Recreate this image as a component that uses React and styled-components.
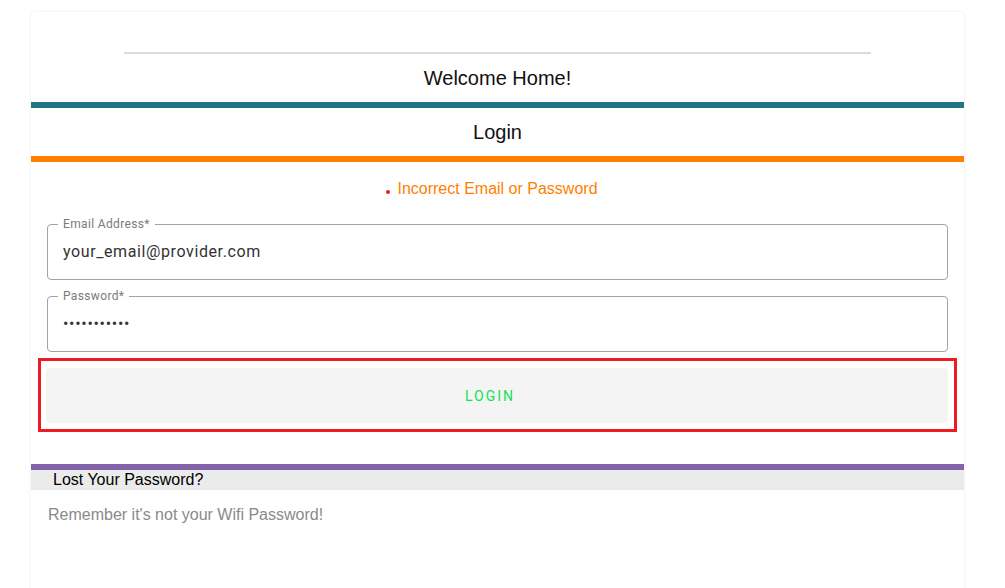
import styled, { createGlobalStyle } from 'styled-components';

const GlobalStyle = createGlobalStyle`
  body {
    margin: 0;
    background: #fff;
    font-family: "Liberation Sans", Arial, sans-serif;
  }
`;

const Page = styled.div`
  padding: 12px 41px 0 31px;
  height: 576px;
  overflow: hidden;
`;

const Card = styled.div`
  background: #fff;
  border-radius: 4px;
  box-shadow: 0 0 3px rgba(0, 0, 0, 0.09);
  min-height: 620px;
  padding-top: 40px;
`;

const Rule = styled.hr`
  width: 80%;
  margin: 0 auto;
  border: none;
  border-top: 2px solid #dcdcdc;
`;

const Title = styled.div`
  height: 48px;
  display: flex;
  align-items: center;
  justify-content: center;
  font-size: 20px;
  color: #111;
`;

const Bar = styled.div`
  height: 6px;
  background: ${(p) => p.color};
`;

const Error = styled.div`
  margin-top: 18px;
  text-align: center;
  color: #ff8000;
  font-size: 16px;
  line-height: 18px;
`;

const Dot = styled.span`
  display: inline-block;
  width: 4px;
  height: 4px;
  border-radius: 50%;
  background: #e3211c;
  margin-left: -11px;
  margin-right: 7px;
  vertical-align: baseline;
`;

const Form = styled.form`
  padding: 26px 16px 0 16px;
  display: flex;
  flex-direction: column;
  gap: 16px;
`;

const Field = styled.div`
  position: relative;
  padding: 0 14px 2px 14px;
  height: 56px;
  box-sizing: border-box;
  border: 1px solid #a3a3a3;
  border-radius: 4px;
  display: flex;
  align-items: center;
`;

const Label = styled.label`
  position: absolute;
  top: -8px;
  left: 10px;
  padding: 0 5px;
  background: #fff;
  font-family: Roboto, sans-serif;
  font-size: 12px;
  line-height: 14px;
  letter-spacing: 0.35px;
  color: #7a7a7a;
`;

const Input = styled.input`
  border: none;
  outline: none;
  width: 100%;
  padding: 0 1px;
  background: transparent;
  font-family: Roboto, sans-serif;
  font-size: 16px;
  color: #333;
  letter-spacing: ${(p) => (p.type === 'password' ? '0.7px' : '0.6px')};
`;

const Highlight = styled.div`
  margin: -10px -9px 0 -9px;
  border: 3px solid #ed1c24;
  padding: 7px 6px 6px 5px;
`;

const LoginButton = styled.button`
  width: 100%;
  height: 55px;
  border: none;
  border-radius: 4px;
  background: #f4f4f4;
  color: #16e058;
  font-family: Roboto, sans-serif;
  font-size: 14px;
  font-weight: 400;
  letter-spacing: 2px;
  text-transform: uppercase;
  padding-right: 20px;
  cursor: pointer;
`;

const Lost = styled.div`
  margin-top: 32px;
`;

const LostHeader = styled.div`
  height: 20px;
  background: #ebebeb;
  padding-left: 22px;
  font-size: 16px;
  line-height: 20px;
  color: #000;
`;

const Hint = styled.p`
  margin: 16px 0 0 17px;
  font-size: 16px;
  line-height: 18px;
  color: #8a8a8a;
`;

export default function App() {
  return (
    <>
      <GlobalStyle />
      <Page>
        <Card>
          <Rule />
          <Title>Welcome Home!</Title>
          <Bar color="#247487" />
          <Title>Login</Title>
          <Bar color="#ff8000" />

          <Error>
            <Dot />
            Incorrect Email or Password
          </Error>

          <Form onSubmit={(e) => e.preventDefault()}>
            <Field>
              <Label>Email Address*</Label>
              <Input type="text" defaultValue="your_email@provider.com" />
            </Field>
            <Field>
              <Label>Password*</Label>
              <Input type="password" defaultValue="wifipassw0r" />
            </Field>
            <Highlight>
              <LoginButton type="submit">Login</LoginButton>
            </Highlight>
          </Form>

          <Lost>
            <Bar color="#8363a9" />
            <LostHeader>Lost Your Password?</LostHeader>
            <Hint>Remember it's not your Wifi Password!</Hint>
          </Lost>
        </Card>
      </Page>
    </>
  );
}
